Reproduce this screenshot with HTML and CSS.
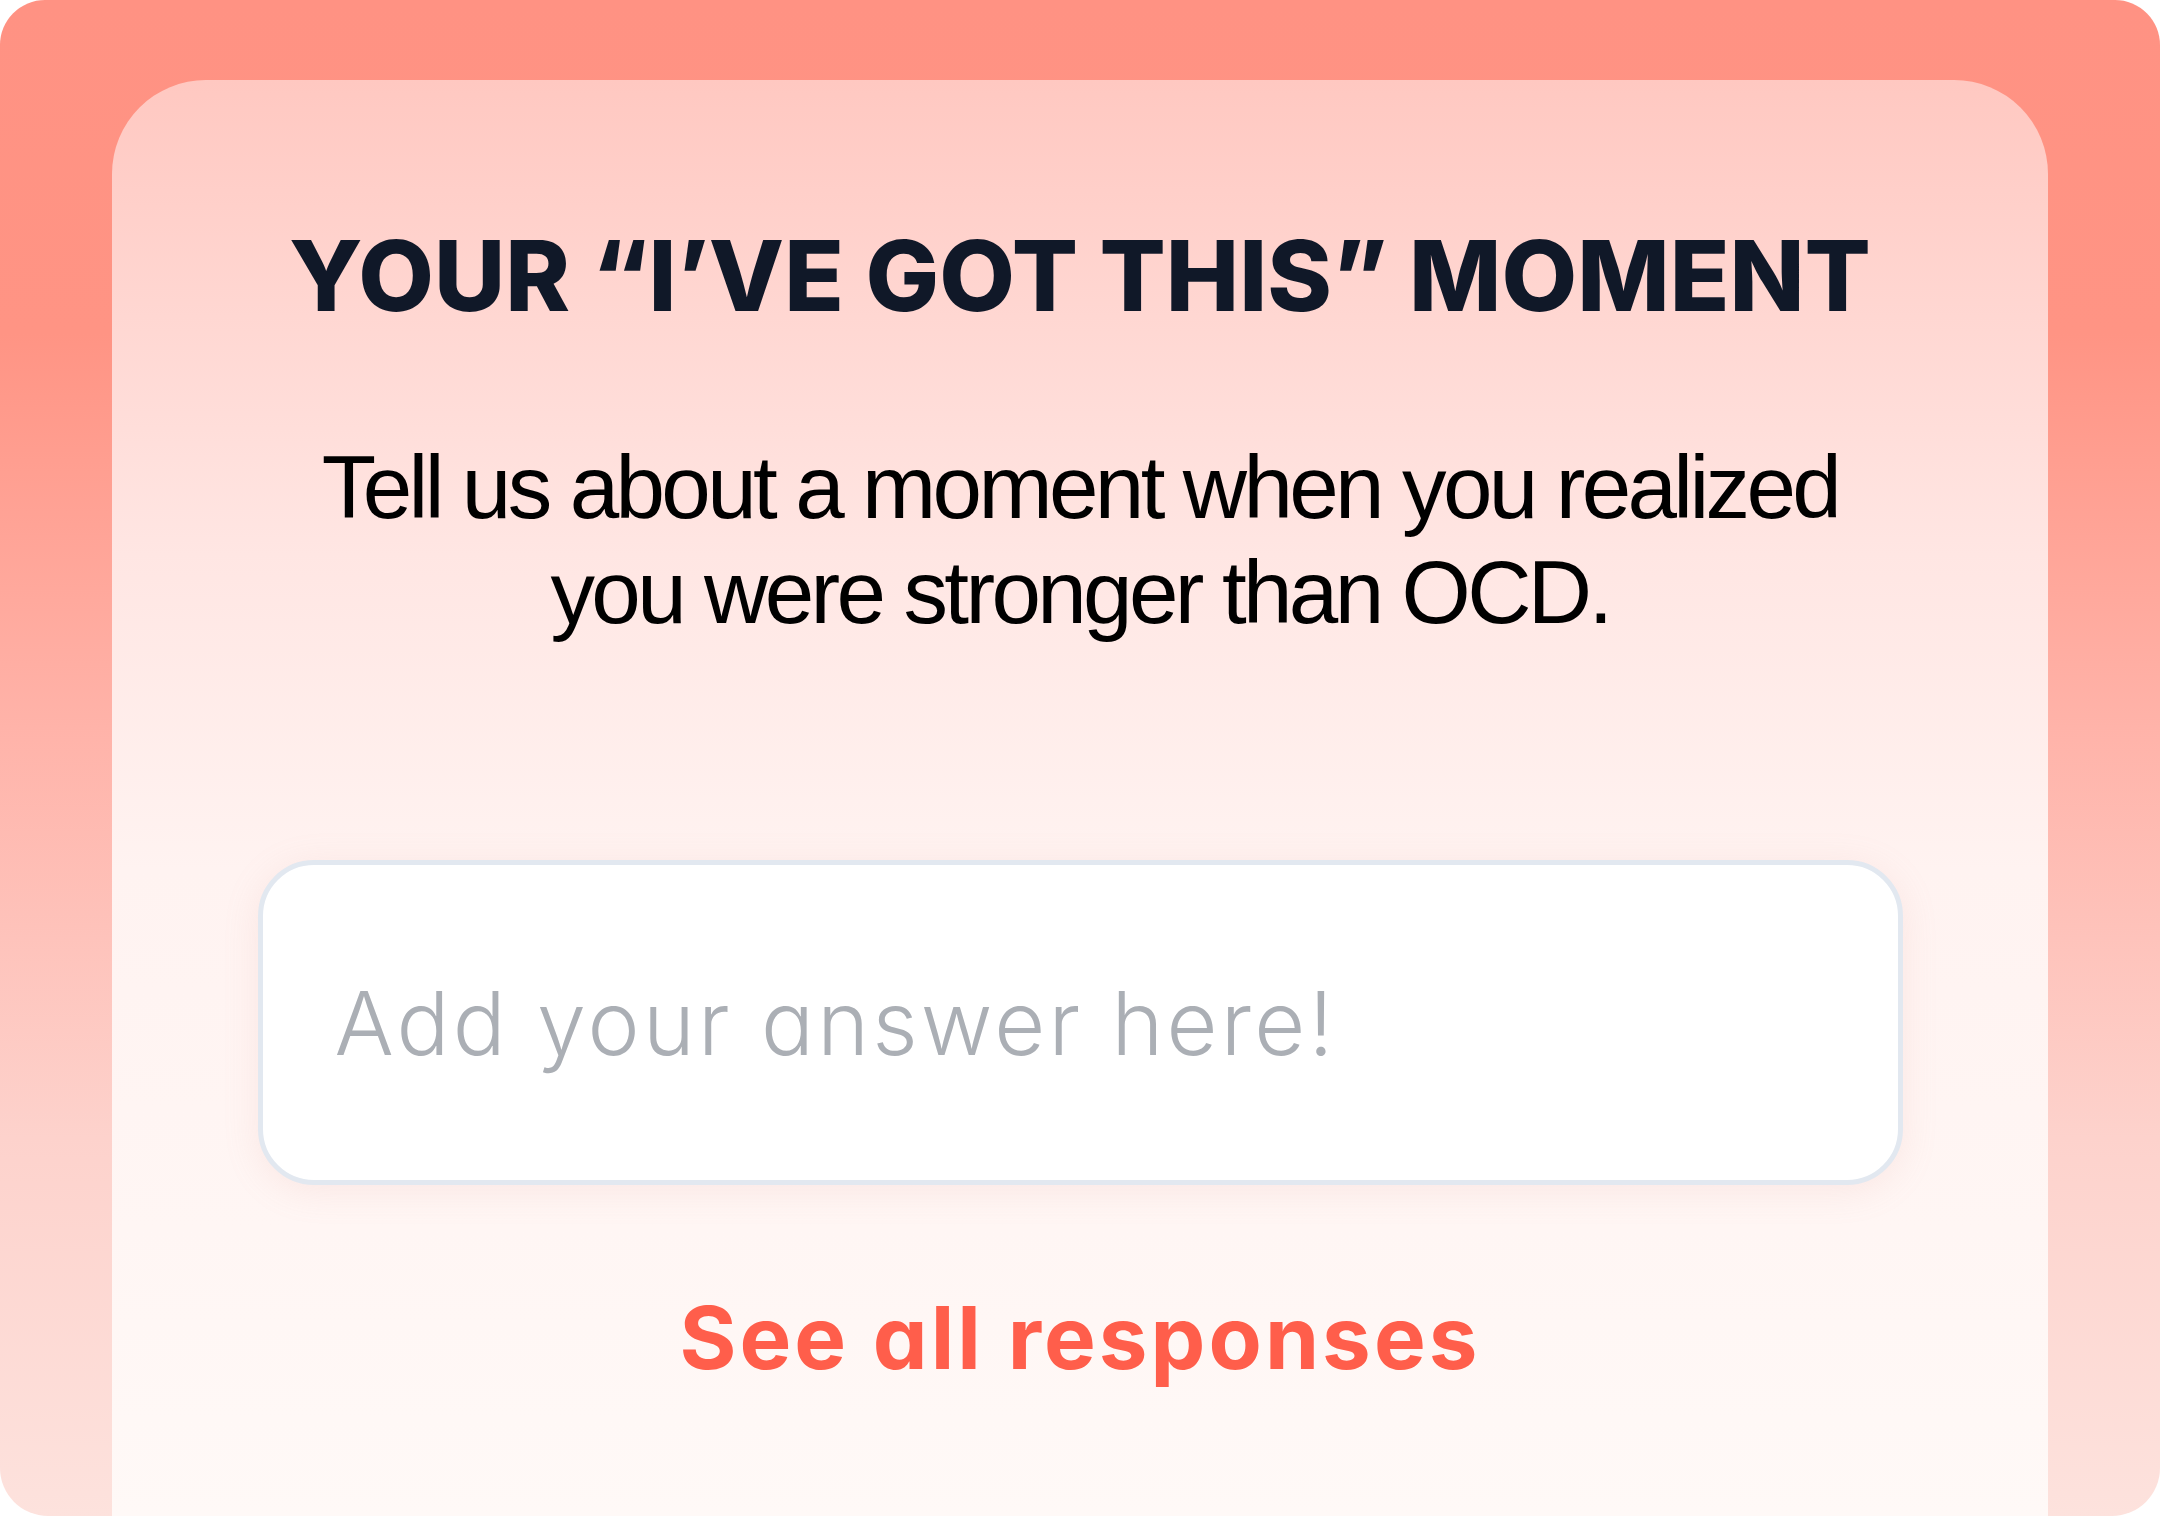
FILE: index.html
```html
<!DOCTYPE html>
<html lang="en">
<head>
<meta charset="utf-8">
<title>Your I've got this moment</title>
<link rel="stylesheet" href="styles.css">
</head>
<body>
<div class="frame">
  <section class="card">
    <h1 class="title">YOUR “I’VE GOT THIS” MOMENT</h1>
    <p class="prompt">Tell us about a moment when you realized<br>you were stronger than OCD.</p>
    <input class="answer" type="text" placeholder="Add your answer here!">
    <a class="see-all" href="#">See all responses</a>
  </section>
</div>
</body>
</html>
```

FILE: styles.css
```css
html, body {
  margin: 0;
  padding: 0;
  background: #ffffff;
}

.frame {
  width: 2160px;
  height: 1516px;
  box-sizing: border-box;
  padding: 80px 112px 0;
  border-radius: 45px 45px 48px 48px;
  overflow: hidden;
  background: linear-gradient(180deg, #ff9283 0%, #ff9484 22%, #ffb3a9 48%, #fdd2cc 75%, #fde2dd 100%);
  display: flex;
}

.card {
  flex: 1;
  border-radius: 94px 94px 0 0;
  background: linear-gradient(180deg, #ffc8c1 0%, #ffe6e3 33%, #fff3f1 55%, #fff6f4 80%, #fff9f7 100%);
  display: flex;
  flex-direction: column;
  align-items: center;
  padding-top: 136px;
}

.title {
  margin: 0;
  font-family: Inter, "Liberation Sans", sans-serif;
  font-weight: 800;
  font-size: 98px;
  line-height: 120px;
  letter-spacing: 0;
  color: #101828;
  white-space: nowrap;
}

.prompt {
  margin: 99px 0 0;
  font-family: "Liberation Sans", Arial, sans-serif;
  font-weight: 400;
  font-size: 89px;
  line-height: 105px;
  letter-spacing: -0.041em;
  color: #000000;
  text-align: center;
}

.answer {
  margin-top: 215px;
  width: 1645px;
  height: 325px;
  box-sizing: border-box;
  border: 5px solid #e2e8f0;
  border-radius: 56px;
  background: #ffffff;
  box-shadow: 0 6px 36px rgba(220, 150, 140, 0.14);
  padding: 0 72px;
  font-family: Inter, "Liberation Sans", sans-serif;
  font-feature-settings: "cv11";
  font-weight: 300;
  font-size: 88px;
  letter-spacing: 0.037em;
  color: #1f2937;
  outline: none;
}

.answer::placeholder {
  color: #abafb5;
  opacity: 1;
}

.see-all {
  margin-top: 101px;
  font-family: Inter, "Liberation Sans", sans-serif;
  font-feature-settings: "cv11";
  font-weight: 700;
  font-size: 87px;
  line-height: 104px;
  letter-spacing: 0.035em;
  color: #ff5e4b;
  text-decoration: none;
}
```
